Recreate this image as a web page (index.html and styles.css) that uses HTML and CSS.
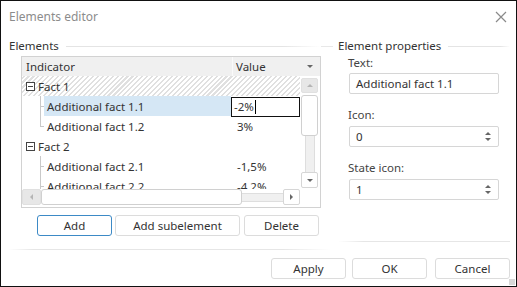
FILE: index.html
```html
<!DOCTYPE html>
<html lang="en">
<head>
    <meta charset="UTF-8">
    <title>Elements editor</title>
    <link rel="stylesheet" href="styles.css">
</head>
<body>
    <div class="dialog">
        <!-- Title bar -->
        <div class="titlebar">
            <span class="title">Elements editor</span>
            <svg class="close" width="12" height="12" viewBox="0 0 12 12">
                <path d="M1 1L11 11M11 1L1 11" stroke="#8a8a8a" stroke-width="1.2" fill="none"/>
            </svg>
        </div>

        <div class="main">
            <!-- Elements -->
            <div class="left">
                <div class="group-head">
                    <span class="group-title">Elements</span>
                    <span class="rule"></span>
                </div>

                <div class="tree">
                    <div class="tree-head">
                        <div class="th th-ind">Indicator</div>
                        <div class="th th-val">Value</div>
                        <div class="th th-menu"><span class="tri-down dark"></span></div>
                    </div>

                    <div class="tree-body">
                        <div class="rows">
                            <div class="row row-parent hatched">
                                <span class="expander"></span>
                                <span class="cell-ind">Fact 1</span>
                            </div>
                            <div class="row">
                                <span class="guide"></span>
                                <span class="cell-ind selected">Additional fact 1.1</span>
                                <span class="cell-val"><span class="editor">-2%<i class="caret"></i></span></span>
                            </div>
                            <div class="row">
                                <span class="guide last"></span>
                                <span class="cell-ind">Additional fact 1.2</span>
                                <span class="cell-val">3%</span>
                            </div>
                            <div class="row row-parent">
                                <span class="expander"></span>
                                <span class="cell-ind">Fact 2</span>
                            </div>
                            <div class="row">
                                <span class="guide"></span>
                                <span class="cell-ind">Additional fact 2.1</span>
                                <span class="cell-val">-1,5%</span>
                            </div>
                            <div class="row">
                                <span class="guide"></span>
                                <span class="cell-ind">Additional fact 2.2</span>
                                <span class="cell-val">-4,2%</span>
                            </div>
                        </div>

                        <div class="vscroll">
                            <div class="sb-btn disabled"><span class="tri-up"></span></div>
                            <div class="sb-thumb-v"></div>
                            <div class="sb-track-v"></div>
                            <div class="sb-btn"><span class="tri-down dark"></span></div>
                        </div>
                    </div>

                    <div class="hscroll">
                        <div class="sb-btn-h disabled"><span class="tri-left"></span></div>
                        <div class="sb-thumb-h"></div>
                        <div class="sb-track-h"></div>
                        <div class="sb-btn-h"><span class="tri-right dark"></span></div>
                    </div>
                </div>

                <div class="actions">
                    <button class="btn btn-add focused">Add</button>
                    <button class="btn btn-sub">Add subelement</button>
                    <button class="btn btn-del">Delete</button>
                </div>

                <div class="divider"></div>
            </div>

            <!-- Element properties -->
            <div class="right">
                <div class="group-head">
                    <span class="rule short"></span>
                    <span class="group-title">Element properties</span>
                    <span class="rule"></span>
                </div>

                <div class="field">
                    <div class="label">Text:</div>
                    <div class="input">Additional fact 1.1</div>
                </div>
                <div class="field">
                    <div class="label">Icon:</div>
                    <div class="input spin">0<span class="spin-arrows"><span class="tri-up dark"></span><span class="tri-down dark"></span></span></div>
                </div>
                <div class="field">
                    <div class="label">State icon:</div>
                    <div class="input spin">1<span class="spin-arrows"><span class="tri-up dark"></span><span class="tri-down dark"></span></span></div>
                </div>

                <div class="divider right-divider"></div>
            </div>
        </div>

        <!-- Dialog buttons -->
        <div class="footer">
            <button class="btn">Apply</button>
            <button class="btn">OK</button>
            <button class="btn">Cancel</button>
            <span class="grip"></span>
        </div>
    </div>
</body>
</html>
```

FILE: styles.css
```css
/* General */
body {
    margin: 0;
    font-family: "Noto Sans", "Open Sans", sans-serif;
    font-size: 11.5px;
    color: #333;
    background: #fff;
}

.dialog {
    width: 517px;
    height: 287px;
    box-sizing: border-box;
    border: 1px solid #111;
    display: flex;
    flex-direction: column;
    position: relative;
}

/* Title bar */
.titlebar {
    height: 30px;
    display: flex;
    align-items: center;
    justify-content: space-between;
    padding: 0 9px 0 8px;
}

.title {
    font-size: 12px;
    color: #8c8c8c;
}

.close {
    margin-top: 1px;
}

/* Panels */
.main {
    height: 219px;
    display: flex;
}

.left {
    width: 320px;
    display: flex;
    flex-direction: column;
    padding-left: 8px;
    box-sizing: border-box;
}

.right {
    flex: 1;
    display: flex;
    flex-direction: column;
    padding-right: 6px;
}

.group-head {
    height: 18px;
    margin-top: 6px;
    display: flex;
    align-items: center;
    line-height: 18px;
}

.group-title {
    color: #333;
    white-space: nowrap;
}

.rule {
    flex: 1;
    height: 1px;
    margin-left: 7px;
    background: linear-gradient(to right, #e4e4e4 85%, rgba(228, 228, 228, 0));
}

.rule.short {
    flex: 0 0 12px;
    margin: 0 5px 0 0;
    background: #e8e8e8;
}

/* Tree grid */
.tree {
    width: 300px;
    height: 152px;
    margin: 1px 0 0 12px;
    box-sizing: border-box;
    border: 1px solid #d2d2d2;
    display: flex;
    flex-direction: column;
}

.tree-head {
    height: 19px;
    display: flex;
    background: #f0f0f0;
}

.th {
    line-height: 19px;
    box-sizing: border-box;
}

.th-ind {
    width: 211px;
    padding-left: 4px;
    border-right: 1px solid #fafafa;
}

.th-val {
    width: 67px;
    padding-left: 3px;
}

.th-menu {
    flex: 1;
    display: flex;
    align-items: center;
    justify-content: center;
}

.tree-body {
    height: 113px;
    display: flex;
    overflow: hidden;
}

.rows {
    width: 278px;
    overflow: hidden;
}

.row {
    height: 20px;
    display: flex;
    align-items: stretch;
    line-height: 21px;
    white-space: nowrap;
}

.row-parent .cell-ind {
    padding-left: 3px;
}

.hatched {
    background: repeating-linear-gradient(-45deg, #fff 0 2px, #e0e0e0 2px 3.5px);
}

.expander {
    width: 7px;
    height: 7px;
    margin: 6px 0 0 4px;
    border: 1px solid #444;
    background: linear-gradient(#444, #444) center / 5px 1px no-repeat, #fff;
}

.guide {
    width: 22px;
    background:
        linear-gradient(#c9c9c9, #c9c9c9) 18px 0 / 1px 100% no-repeat,
        linear-gradient(#c9c9c9, #c9c9c9) 18px 50% / 4px 1px no-repeat;
}

.guide.last {
    background:
        linear-gradient(#c9c9c9, #c9c9c9) 18px 0 / 1px 50% no-repeat,
        linear-gradient(#c9c9c9, #c9c9c9) 18px 50% / 4px 1px no-repeat;
}

.row .guide + .cell-ind {
    width: 187px;
    padding-left: 3px;
    box-sizing: border-box;
}

.cell-ind.selected {
    background: #d5e7f5;
}

.cell-val {
    padding-left: 6px;
    flex: 1;
}

.editor {
    display: flex;
    align-items: center;
    height: 18px;
    margin: 1px 0 0 -6px;
    padding-left: 2px;
    border: 1px solid #111;
    background: #fff;
    line-height: 18px;
}

.caret {
    width: 1px;
    height: 14px;
    background: #000;
    margin-left: 1px;
}

/* Scrollbars */
.vscroll {
    width: 17px;
    margin-left: 1px;
    display: flex;
    flex-direction: column;
}

.sb-btn {
    height: 15px;
    margin-top: 2px;
    box-sizing: border-box;
    border: 1px solid #d6d6d6;
    border-radius: 2px;
    background: #fff;
    display: flex;
    align-items: center;
    justify-content: center;
}

.sb-btn:last-child {
    margin: 0 0 1px;
    height: 16px;
}

.sb-btn.disabled,
.sb-btn-h.disabled {
    background: #e7e7e7;
    border-color: #e0e0e0;
}

.sb-thumb-v {
    height: 41px;
    margin-top: 2px;
    box-sizing: border-box;
    border: 1px solid #d0d0d0;
    border-radius: 3px;
    background: #fff;
}

.sb-track-v {
    flex: 1;
    width: 8px;
    margin: 0 auto;
    border-left: 1px solid #dedede;
    border-right: 1px solid #dedede;
    background: #f0f0f0;
}

.hscroll {
    height: 16px;
    display: flex;
    width: 278px;
}

.sb-btn-h {
    width: 19px;
    box-sizing: border-box;
    border: 1px solid #d6d6d6;
    border-radius: 2px;
    background: #fff;
    display: flex;
    align-items: center;
    justify-content: center;
}

.sb-btn-h:last-child {
    width: 17px;
}

.sb-thumb-h {
    width: 201px;
    box-sizing: border-box;
    border: 1px solid #d0d0d0;
    border-radius: 3px;
    background: #fff;
}

.sb-track-h {
    flex: 1;
    height: 7px;
    margin: auto 0;
    border-top: 1px solid #dedede;
    border-bottom: 1px solid #dedede;
    background: #f0f0f0;
}

/* Small triangles */
.tri-up,
.tri-down,
.tri-left,
.tri-right {
    width: 0;
    height: 0;
    border: 3px solid transparent;
}

.tri-up {
    border-bottom: 3px solid #b5b5b5;
    border-top-width: 0;
}

.tri-down {
    border-top: 3px solid #b5b5b5;
    border-bottom-width: 0;
}

.tri-left {
    border-right: 3px solid #b5b5b5;
    border-left-width: 0;
}

.tri-right {
    border-left: 3px solid #b5b5b5;
    border-right-width: 0;
}

.tri-up.dark { border-bottom-color: #666; }
.tri-down.dark { border-top-color: #666; }
.tri-right.dark { border-left-color: #666; }

/* Buttons */
.actions {
    display: flex;
    margin: 7px 0 0 28px;
}

.btn {
    height: 21px;
    padding: 0;
    font-family: inherit;
    font-size: 11.5px;
    color: #333;
    background: #fff;
    border: 1px solid #dcdcdc;
    border-radius: 3px;
}

.btn-add {
    width: 75px;
}

.btn-sub {
    width: 125px;
    margin-left: 3px;
}

.btn-del {
    width: 75px;
    margin-left: 4px;
}

.btn.focused {
    border-color: #3d8ac6;
}

.divider {
    height: 1px;
    margin: 13px 0 0 -1px;
    width: 323px;
    background: linear-gradient(to right, rgba(230, 230, 230, 0), #e6e6e6 8%, #e6e6e6 85%, rgba(230, 230, 230, 0));
}

/* Properties */
.field {
    margin-left: 27px;
}

.label {
    height: 16px;
    line-height: 16px;
    color: #444;
}

.input {
    width: 150px;
    height: 21px;
    margin: 2px 0 0 1px;
    padding-left: 6px;
    box-sizing: border-box;
    border: 1px solid #d6d6d6;
    border-radius: 2px;
    line-height: 19px;
    display: flex;
    align-items: center;
}

.field + .field {
    margin-top: 13px;
}

.field .spin {
    margin-top: 3px;
    justify-content: space-between;
    padding-right: 7px;
}

.spin-arrows {
    display: flex;
    flex-direction: column;
    gap: 3px;
}

.right-divider {
    width: auto;
    margin: auto 0 8px 17px;
    background: linear-gradient(to right, rgba(230, 230, 230, 0), #e6e6e6 15%, #e6e6e6);
}

/* Footer */
.footer {
    flex: 1;
    display: flex;
    justify-content: flex-end;
    align-items: flex-start;
    padding: 8px 6px 0 0;
}

.footer .btn {
    width: 75px;
    margin-left: 6px;
}

.footer .btn:nth-child(3) {
    margin-left: 8px;
}

.grip {
    position: absolute;
    right: 1px;
    bottom: 1px;
    width: 6px;
    height: 6px;
    background: radial-gradient(#aaa 0.6px, transparent 0.8px) 0 0 / 2px 2px;
}
```
